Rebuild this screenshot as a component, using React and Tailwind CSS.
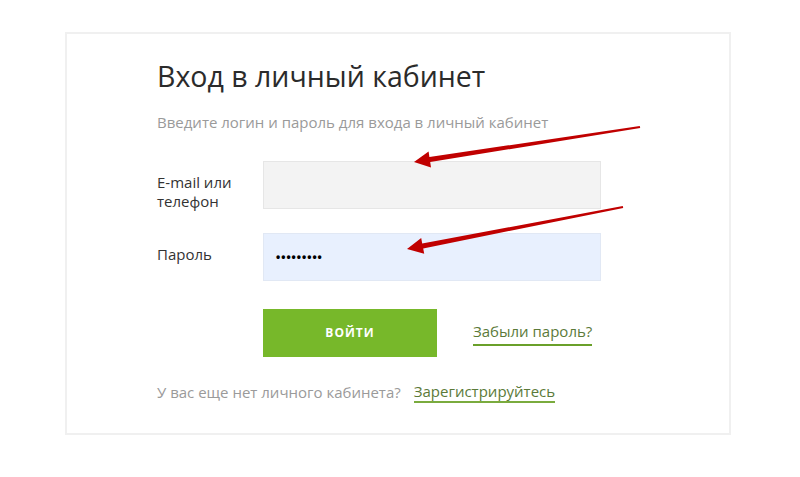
export default function App() {
  const font = { fontFamily: '"Open Sans", "Liberation Sans", sans-serif' };
  return (
    <div className="relative w-[800px] h-[477px] bg-white overflow-hidden" style={font}>
      <div className="ml-[65px] mt-[32px] w-[666px] h-[403px] border-2 border-[#f0f0f0] pl-[90px] pt-[24px]">
        <h1 className="text-[28.5px] leading-[36px] text-[#2b2b2b] font-normal">Вход в личный кабинет</h1>
        <p className="mt-[18px] text-[15px] leading-[20px] text-[#9a9a9a]">
          Введите логин и пароль для входа в личный кабинет
        </p>
        <div className="mt-[29px] flex items-start">
          <label className="w-[106px] pt-[12px] text-[15px] leading-[19px] text-[#333333]">
            E-mail или
            <br />
            телефон
          </label>
          <div className="w-[338px] h-[48px] bg-[#f3f3f3] border border-[#e6e6e6]" />
        </div>
        <div className="mt-[22px] flex items-center">
          <label className="w-[106px] pb-[6px] text-[15px] leading-[19px] text-[#333333]">Пароль</label>
          <div className="w-[338px] h-[48px] bg-[#e8f0fe] border border-[#e1e8f4] flex items-center pl-[12px]">
            <span className="text-[12px] font-bold tracking-[1px] text-black" style={{ fontFamily: '"Liberation Sans", sans-serif' }}>
              •••••••••
            </span>
          </div>
        </div>
        <div className="mt-[28px] flex items-center">
          <div className="w-[106px]" />
          <button className="w-[174px] h-[48px] bg-[#77b82a] text-white text-[12px] font-bold tracking-[1px]">
            ВОЙТИ
          </button>
          <a className="ml-[36px] text-[15px] leading-[20px] text-[#5b7a39] border-b-2 border-[#6aa02a] pb-[3px]">
            Забыли пароль?
          </a>
        </div>
        <div className="mt-[24px] flex items-center text-[15px] leading-[20px]">
          <span className="text-[#9a9a9a]">У вас еще нет личного кабинета?</span>
          <a className="ml-[13px] text-[#5b7a39] border-b-2 border-[#7aab3e]">Зарегистрируйтесь</a>
        </div>
      </div>
      <svg className="absolute inset-0 pointer-events-none" width="800" height="477" viewBox="0 0 800 477">
        <polygon
          fill="#c00000"
          points="639.8,126 429.4,157 428.6,151.6 414,162 431,167.4 430.2,162 640.2,128"
        />
        <polygon
          fill="#c00000"
          points="622.8,206 422.2,243.4 421.2,238 407,249 424.2,253.8 423.2,248.4 623.2,208"
        />
      </svg>
    </div>
  );
}
